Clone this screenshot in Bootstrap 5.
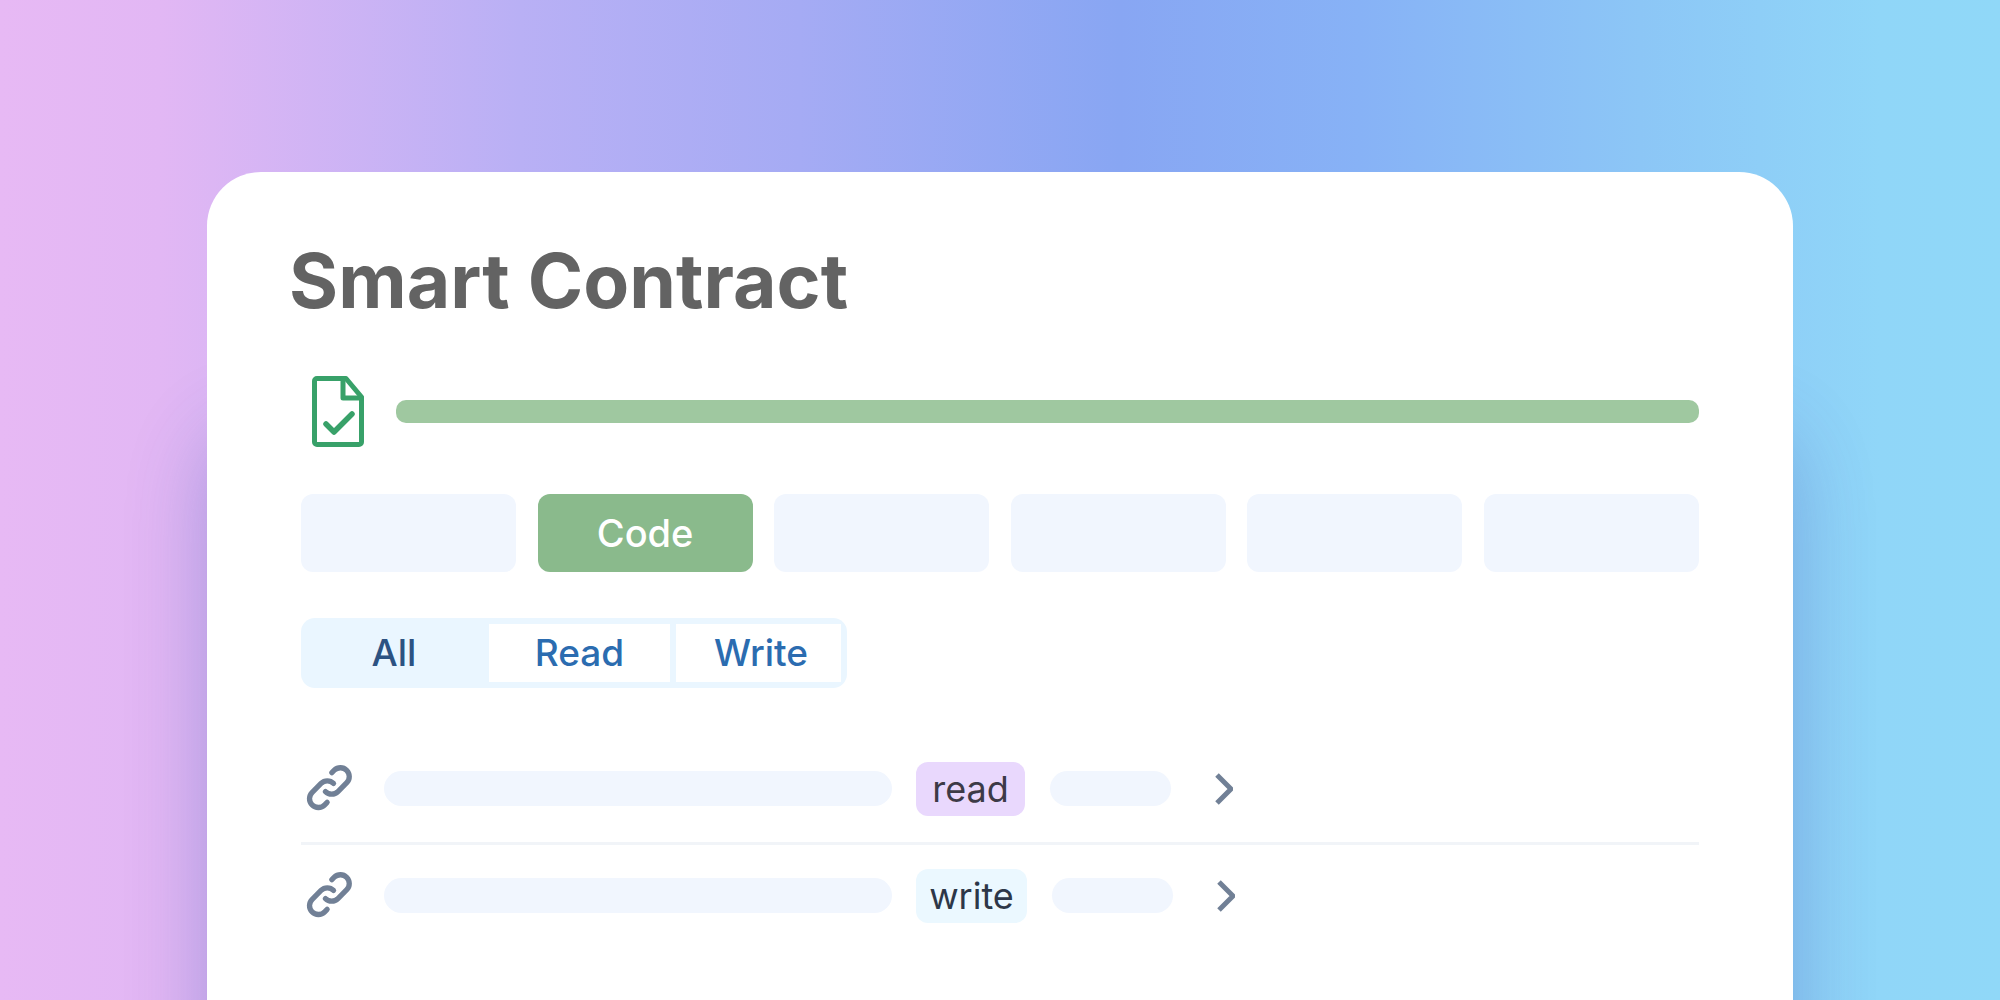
<!DOCTYPE html>
<html lang="en">
<head>
<meta charset="utf-8">
<title>Smart Contract</title>
<link rel="stylesheet" href="https://cdn.jsdelivr.net/npm/bootstrap@5.3.0/dist/css/bootstrap.min.css">
<style>
html,body{height:1000px;margin:0;overflow:hidden;}
body{font-family:"Inter","Liberation Sans",sans-serif;}
.stage{width:2000px;height:1000px;overflow:hidden;padding:172px 207px 0 207px;
  background:linear-gradient(90deg,#e7b9f4 0%,#e2b7f4 8%,#b9b0f5 26%,#a5abf4 40%,#88a6f3 56%,#87b2f6 68%,#8cc6f6 82%,#90d6f8 94%,#90d8f8 100%);}
.sheet{width:1586px;height:900px;background:#fff;border-radius:54px 54px 0 0;padding:69px 94px 0 94px;box-shadow:0 260px 80px rgba(60,80,170,.3);}
.heading{font-weight:700;font-size:75px;line-height:80px;color:#636363;margin:0 0 0 -12px;letter-spacing:.05px;}
.progress-row{margin-top:55px;height:71px;}
.file-ico{width:52px;height:71px;margin-left:11px;flex:none;}
.meter{height:23px;background:#9fc8a0;border-radius:10px;margin-left:32px;}
.tab-row{margin-top:47px;}
.tab-cell{width:215px;height:78px;background:#f1f6fe;border-radius:12px;font-size:38px;font-weight:500;}
.tab-on{background:#8aba8c;color:#fff;}
.seg{margin-top:46px;width:546px;height:70px;background:#eaf6ff;border-radius:14px;padding:6px;font-size:37px;font-weight:500;color:#2b6cb0;}
.seg-all{width:182px;color:#2c5282;padding-right:8px;}
.seg-item{background:#fff;}
.seg-read{width:181px;margin-right:6px;}
.seg-write{width:165px;padding-left:5px;}
.rows{margin-top:47px;}
.line-row{height:107px;}
.line-row+.line-row{border-top:3px solid #f1f4f8;height:104px;}
.chain{width:53px;height:53px;flex:none;margin:-2px 28px 0 2px;}
.skel{height:35px;background:#f1f6fe;border-radius:18px;flex:none;}
.skel-long{width:508px;margin-right:24px;}
.skel-short{width:121px;margin-left:25px;margin-right:44px;}
.tagpill{height:54px;width:109px;border-radius:12px;font-size:36px;color:#3d3a47;flex:none;}
.tag-read{background:#e9d8fd;}
.tag-write{background:#ebf8ff;width:111px;color:#2d3748;}
.chev{width:18px;height:32px;flex:none;}
</style>
</head>
<body>
<div class="stage">
  <main class="sheet">
    <h1 class="heading">Smart Contract</h1>
    <div class="progress-row d-flex align-items-center">
      <svg class="file-ico" viewBox="0 0 52 71" fill="none" stroke="#38a169" stroke-width="5" stroke-linejoin="round" stroke-linecap="round"><path d="M34 2.500H5a2.500 2.500 0 0 0-2.500 2.500v61a2.500 2.500 0 0 0 2.500 2.500h42a2.500 2.500 0 0 0 2.500-2.500V21z"/><path d="M31 2.500V22H49.500"/><path stroke-width="5.500" d="M14 48l8 8 18-18"/></svg>
      <div class="meter flex-grow-1"></div>
    </div>
    <div class="tab-row d-flex justify-content-between">
      <div class="tab-cell"></div>
      <div class="tab-cell tab-on d-flex align-items-center justify-content-center">Code</div>
      <div class="tab-cell"></div>
      <div class="tab-cell"></div>
      <div class="tab-cell"></div>
      <div class="tab-cell"></div>
    </div>
    <div class="seg d-flex">
      <div class="seg-all d-flex align-items-center justify-content-center">All</div>
      <div class="seg-item seg-read d-flex align-items-center justify-content-center">Read</div>
      <div class="seg-item seg-write d-flex align-items-center justify-content-center">Write</div>
    </div>
    <div class="rows">
      <div class="line-row d-flex align-items-center">
        <svg class="chain" viewBox="0 0 24 24" fill="none" stroke="#718096" stroke-width="2.400" stroke-linecap="round" stroke-linejoin="round"><path d="M13.828 10.172a4 4 0 00-5.656 0l-4 4a4 4 0 105.656 5.656l1.102-1.101m-.758-4.899a4 4 0 005.656 0l4-4a4 4 0 00-5.656-5.656l-1.100 1.100"/></svg>
        <div class="skel skel-long"></div>
        <div class="tagpill tag-read d-flex align-items-center justify-content-center">read</div>
        <div class="skel skel-short"></div>
        <svg class="chev" viewBox="0 0 18 32" fill="none" stroke="#718096" stroke-width="5"><path d="M2 2l14 14L2 30"/></svg>
      </div>
      <div class="line-row d-flex align-items-center">
        <svg class="chain" viewBox="0 0 24 24" fill="none" stroke="#718096" stroke-width="2.400" stroke-linecap="round" stroke-linejoin="round"><path d="M13.828 10.172a4 4 0 00-5.656 0l-4 4a4 4 0 105.656 5.656l1.102-1.101m-.758-4.899a4 4 0 005.656 0l4-4a4 4 0 00-5.656-5.656l-1.100 1.100"/></svg>
        <div class="skel skel-long"></div>
        <div class="tagpill tag-write d-flex align-items-center justify-content-center">write</div>
        <div class="skel skel-short"></div>
        <svg class="chev" viewBox="0 0 18 32" fill="none" stroke="#718096" stroke-width="5"><path d="M2 2l14 14L2 30"/></svg>
      </div>
    </div>
  </main>
</div>
<script src="https://cdn.jsdelivr.net/npm/bootstrap@5.3.0/dist/js/bootstrap.bundle.min.js"></script>
</body>
</html>
